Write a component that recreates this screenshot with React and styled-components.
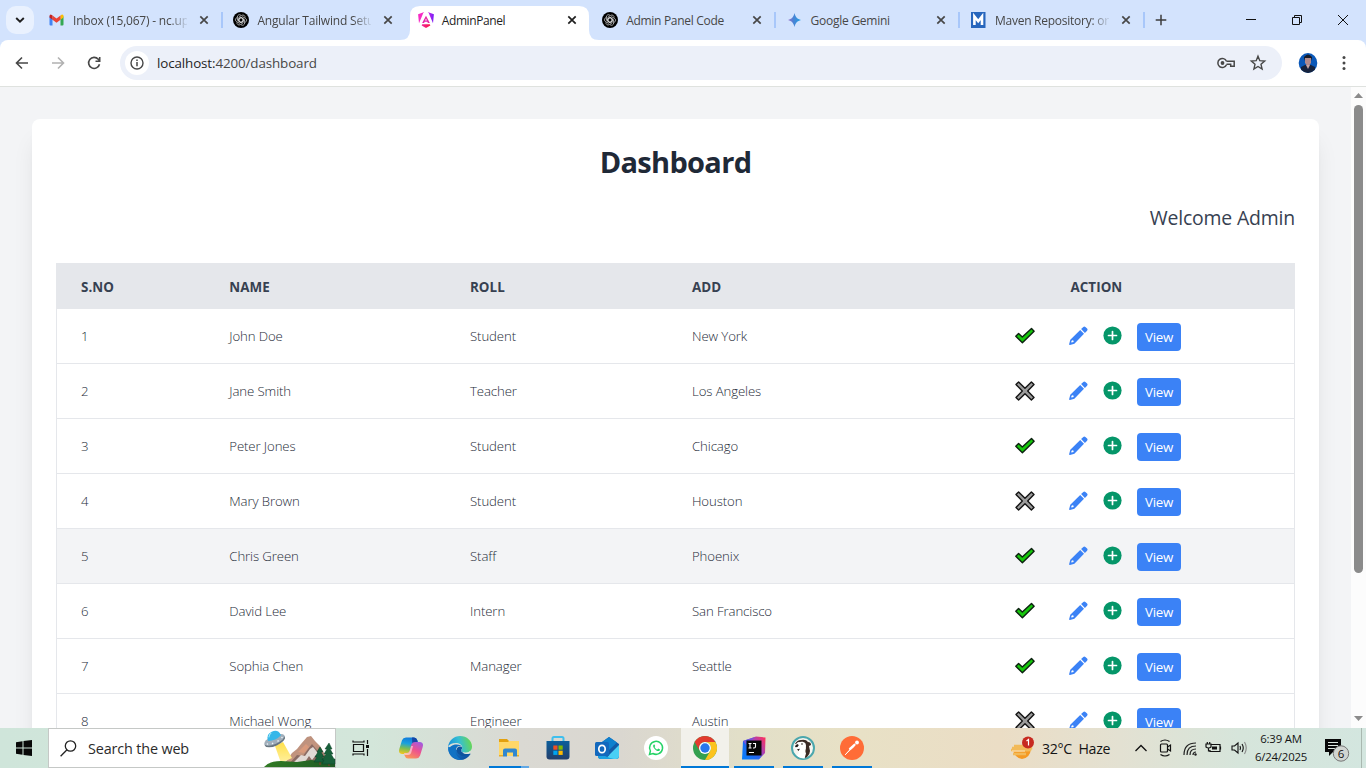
import React from 'react';
import styled, { createGlobalStyle } from 'styled-components';

const GlobalStyle = createGlobalStyle`
  * { box-sizing: border-box; }
  body { margin: 0; overflow: hidden; font-family: "Open Sans", "Noto Sans", sans-serif; }
  svg { display: block; flex: none; overflow: visible; }
`;

const Screen = styled.div`
  width: 1366px;
  height: 768px;
  display: flex;
  flex-direction: column;
  overflow: hidden;
  background: #f3f4f6;
`;

/* ---------- browser chrome ---------- */
const TabStrip = styled.div`
  height: 40px;
  flex: none;
  display: flex;
  align-items: center;
  background: #d3e3fd;
`;
const TabSearch = styled.div`
  width: 28px;
  height: 28px;
  margin: 0 7px 0 6px;
  border-radius: 10px;
  background: #e9f1fe;
  display: grid;
  place-items: center;
`;
const Tab = styled.div`
  position: relative;
  width: 184.4px;
  height: 40px;
  display: flex;
  align-items: center;
  padding-left: 8px;
`;
const ActiveShape = styled.svg`
  position: absolute;
  left: -9.8px;
  top: 0;
`;
const TabIcon = styled.span`
  position: relative;
`;
const TabTitle = styled.span`
  width: 114px;
  margin-left: 8px;
  padding-top: 2px;
  font-size: 12px;
  letter-spacing: ${(p) => p.$spacing || 0}px;
  line-height: 16px;
  white-space: nowrap;
  position: relative;
  color: ${(p) => (p.$active ? '#1f1f1f' : '#474747')};
  ${(p) => p.$fade && 'mask-image: linear-gradient(90deg, #000 84%, transparent 102%);'}
`;
const Divider = styled.i`
  width: 2px;
  height: 16px;
  margin-left: 12px;
  background: ${(p) => (p.$hidden ? 'transparent' : '#a8c7fa')};
`;
const TabClose = styled.span`
  position: relative;
  margin-left: 11.6px;
`;
const NewTab = styled.svg`
  margin-left: 8px;
`;
const WindowButtons = styled.div`
  margin-left: auto;
  display: flex;
  gap: 34px;
  padding-right: 17px;
`;
const Toolbar = styled.div`
  height: 47px;
  display: flex;
  align-items: center;
  background: #fff;
  border-bottom: 1px solid #dfe2df;
  border-radius: 8px 8px 0 0;
  padding-left: 14px;
`;
const ToolbarBack = styled.div`
  flex: none;
  background: #d3e3fd;
`;
const NavIcons = styled.div`
  display: flex;
  gap: 20px;
`;
const Omnibox = styled.div`
  width: 1162px;
  height: 34px;
  margin-left: 18px;
  border-radius: 17px;
  background: #ecf0f9;
  display: flex;
  align-items: center;
  padding: 0 15px 0 5px;
`;
const SiteInfo = styled.span`
  width: 24px;
  height: 24px;
  border-radius: 50%;
  background: #fff;
  display: grid;
  place-items: center;
`;
const Url = styled.span`
  margin-left: 8px;
  flex: 1;
  font-size: 13.4px;
  letter-spacing: -0.12px;
  color: #474747;
  b { font-weight: 400; color: #1f1f1f; }
`;
const OmniIcons = styled.div`
  display: flex;
  align-items: center;
  gap: 14px;
`;
const Avatar = styled.svg`
  margin-left: 16px;
`;
const Kebab = styled.svg`
  margin-left: 23px;
`;

/* ---------- page ---------- */
const Viewport = styled.div`
  height: 641px;
  flex: none;
  display: flex;
  overflow: hidden;
`;
const Page = styled.main`
  flex: 1;
  padding: 32px;
`;
const Card = styled.section`
  height: 760px;
  padding: 24px;
  background: #fff;
  border-radius: 8px;
  box-shadow: 0 20px 25px -5px rgba(0, 0, 0, 0.1), 0 8px 10px -6px rgba(0, 0, 0, 0.1);
`;
const Title = styled.h1`
  margin: 0;
  font-size: 29px;
  line-height: 38px;
  font-weight: 700;
  letter-spacing: -0.68px;
  text-align: center;
  color: #1f2937;
`;
const Welcome = styled.p`
  margin: 23px 0 32px;
  font-size: 19.4px;
  line-height: 27px;
  text-align: right;
  color: #374151;
  letter-spacing: -0.16px;
`;
const Table = styled.div`
  border: 1px solid #e5e7eb;
`;
const Row = styled.div`
  display: grid;
  grid-template-columns: 148.3px 240.7px 222px 347px 1fr;
  height: 55px;
  padding-left: 24px;
  align-items: center;
  border-bottom: 1px solid #e5e7eb;
  background: ${(p) => (p.$hover ? '#f3f4f6' : '#fff')};
  font-size: 13.2px;
  font-weight: 300;
  letter-spacing: -0.1px;
  color: #252b38;
`;
const HeadRow = styled(Row)`
  grid-template-columns: 148.3px 240.7px 222px 378.5px 1fr;
  height: 45px;
  padding-top: 2px;
  background: #e5e7eb;
  font-size: 13.4px;
  font-weight: 700;
  letter-spacing: 0.05px;
  color: #374151;
`;
const Actions = styled.div`
  display: flex;
  align-items: center;
  svg { margin-bottom: 2px; }
`;
const Status = styled.span`
  width: 54px;
  margin: 1px 0 0 -24px;
`;
const AddIcon = styled.span`
  margin: 0 15px;
`;
const ViewButton = styled.button`
  width: 44px;
  height: 28px;
  margin-top: 1px;
  padding: 0;
  border: 0;
  border-radius: 4px;
  background: #3b82f6;
  color: #fff;
  font: 400 13.3px/28px "Open Sans", sans-serif;
  letter-spacing: -0.25px;
`;
const Scrollbar = styled.div`
  width: 15px;
  background: #fcfcfc;
  display: flex;
  flex-direction: column;
  align-items: center;
  padding: 6px 0 7px;
`;
const Thumb = styled.div`
  width: 9px;
  height: 468px;
  margin: 7px 0 auto;
  border-radius: 5px;
  background: #8b8b8b;
`;

/* ---------- taskbar ---------- */
const Taskbar = styled.footer`
  height: 40px;
  flex: none;
  display: flex;
  align-items: stretch;
  background: linear-gradient(90deg, #cfe5da 0, #d3e6da 370px, #dad9d3 520px, #dad7d0 620px, #e2dfc8 740px, #e8e1c6 860px, #ebddc5 1000px, #e3e1d2 1120px, #d6e5db 1240px, #d3e6df 1366px);
`;
const TaskItem = styled.div`
  position: relative;
  flex: none;
  width: ${(p) => p.$width || 49}px;
  display: grid;
  place-items: center;
  background: ${(p) => (p.$active ? '#f2f1eb' : 'transparent')};
`;
const Running = styled.i`
  position: absolute;
  bottom: 0;
  width: ${(p) => (p.$full ? '100%' : '40px')};
  height: 2px;
  background: ${(p) => (p.$stacked ? 'linear-gradient(90deg, #0078d7 80%, #62a8e5 80%)' : '#0078d7')};
`;
const SearchBox = styled.div`
  width: 288px;
  display: flex;
  align-items: center;
  border: 1px solid #c5c8c6;
  background: #fff;
  padding-left: 11px;
  font-size: 14.4px;
  letter-spacing: -0.15px;
  color: #2b2b2b;
  svg:last-child { margin-left: auto; }
`;
const SearchText = styled.span`
  margin-left: 11px;
`;
const Tray = styled.div`
  margin-left: auto;
  display: flex;
  align-items: center;
  color: #151515;
  font-size: 14.2px;
`;
const Weather = styled.span`
  width: 93px;
  margin-left: 8px;
  white-space: pre;
  letter-spacing: -0.35px;
`;
const TrayIcons = styled.div`
  display: flex;
  align-items: center;
  gap: 8.5px;
  svg:nth-child(2) { margin-left: 1.5px; }
`;
const Clock = styled.div`
  width: 60px;
  margin-left: 3.5px;
  display: flex;
  flex-direction: column;
  align-items: center;
  font-size: 11.4px;
  line-height: 18px;
  letter-spacing: -0.2px;
  white-space: nowrap;
`;
const Notice = styled.svg`
  margin: 3px 10px 0 14px;
`;
const ShowDesktop = styled.i`
  width: 5px;
  height: 40px;
  border-left: 1px solid #a9b8b0;
`;

const Close = ({ color = '#474747' }) => (
  <svg width="10" height="10" viewBox="0 0 10 10" stroke={color} strokeWidth="1.7"><path d="M1.3 1.3l7.4 7.4M8.7 1.3L1.3 8.7" /></svg>
);

const Gmail = () => (
  <svg width="16" height="16" viewBox="0 0 16 16">
    <g transform="translate(-.5 0)">
      <path d="M1 4.2V12.5q0 .9 1 .9h2V6.5z" fill="#4285f4" />
      <path d="M15 4.2V12.5q0 .9-1 .9h-2V6.5z" fill="#34a853" />
      <path d="M12 3.5l1-.7q1-.6 1.7.2.3.4.3 1v1.4L12 7.8z" fill="#fbbc04" />
      <path d="M4 3.5L8 6.6l4-3.1v4.3l-4 3-4-3z" fill="#ea4335" />
      <path d="M1 5.4V4q0-1.5 1.3-1.5l.9.4.8.6v4.3z" fill="#c5221f" />
    </g>
  </svg>
);
const OpenAI = () => (
  <svg width="16" height="16" viewBox="0 0 16 16">
    <circle cx="8" cy="8" r="8" fill="#000" />
    <g fill="none" stroke="#d8d8d8" strokeWidth=".7">
      {[0, 60, 120, 180, 240, 300].map((a) => (
        <path key={a} transform={`rotate(${a} 8 8)`} d="M6 8.8V5L8.8 3.3c1.6-.9 3.5.3 3.3 2.2M6 6.7l2-1.2 2.2 1.2" />
      ))}
    </g>
  </svg>
);
const Angular = () => (
  <svg width="16" height="16" viewBox="0 0 16 16">
    <defs>
      <linearGradient id="ngBase" x1="0" x2="1"><stop stopColor="#f0269e" /><stop offset="1" stopColor="#fa1540" /></linearGradient>
      <linearGradient id="ngRight" x1="0" x2="1"><stop stopColor="#d020ec" /><stop offset="1" stopColor="#7222f5" /></linearGradient>
    </defs>
    <path d="M6.3 0L.1 2.2l.9 9L5.3.9z" fill="#f62bc5" />
    <path d="M9.7 0l6.2 2.2-.9 9L10.7.9z" fill="url(#ngRight)" />
    <path d="M8 3.8L4.2 11h1.9l.6-1.3h2.6l.6 1.3h1.9zM8 6.6l.9 1.9H7.1z" fill="#e326a8" fillRule="evenodd" />
    <path d="M4.2 12.2h7.6l.5 1.2L8 16l-4.300-2.600z" fill="url(#ngBase)" />
  </svg>
);
const Gemini = () => (
  <svg width="16" height="16" viewBox="0 0 16 16">
    <defs><linearGradient id="gem" x1="0" y1="0" x2="1" y2="0"><stop stopColor="#9b72cb" /><stop offset=".4" stopColor="#4c82d4" /><stop offset="1" stopColor="#1ba1e3" /></linearGradient></defs>
    <path d="M7.5 1C8.5 5.2 10.3 7 14 8c-3.700 1-5.500 2.800-6.500 7-1-4.200-2.800-6-6.500-7 3.700-1 5.500-2.800 6.500-7z" fill="url(#gem)" />
  </svg>
);
const Maven = () => (
  <svg width="16" height="16" viewBox="0 0 16 16">
    <rect x="0" width="14.5" height="16" fill="#2766bd" />
    <path d="M3.4 13V4.500l3.800 4.700L11 4.500V13" fill="none" stroke="#fff" strokeWidth="2.6" />
  </svg>
);

const tabs = [
  { title: 'Inbox (15,067) - nc.up', icon: <Gmail />, fade: true, spacing: -0.2 },
  { title: 'Angular Tailwind Setu', icon: <OpenAI />, fade: true, noLine: true, spacing: -0.2 },
  { title: 'AdminPanel', icon: <Angular />, active: true, noLine: true, spacing: -0.4 },
  { title: 'Admin Panel Code', icon: <OpenAI />, spacing: -0.3 },
  { title: 'Google Gemini', icon: <Gemini />, spacing: -0.25 },
  { title: 'Maven Repository: or', icon: <Maven />, fade: true, spacing: -0.25 },
];

const Check = () => (
  <svg width="20" height="18" viewBox="0 0 20 18"><path d="M.8 9.3L3.6 6.5l3.7 3.4L16.5 1.500l2.600 2.700L7.400 15.700z" fill="#16c60c" stroke="#0c2010" strokeWidth="1.4" strokeLinejoin="round" /></svg>
);
const Cross = () => (
  <svg width="20" height="20" viewBox="0 0 20 20"><path d="M1 3.6L3.6 1 10 7.2 16.4 1 19 3.600 12.700 10l6.300 6.400-2.600 2.600L10 12.800 3.600 19 1 16.400 7.300 10z" fill="#9b9b9b" stroke="#141414" strokeWidth="1.4" strokeLinejoin="round" /></svg>
);
const Pencil = () => (
  <svg width="19" height="19" viewBox="0 0 19 19" fill="#3b82f6">
    <path d="M12.1 3.1l3.8 3.8 2.2-2.2q1-1.1 0-2.1L16.4.9q-1.100-1-2.100 0z" />
    <path fillRule="evenodd" d="M11.2 4L1.3 13.700.1 18.200q0 .8.9.7l4.400-1.200L15 7.800zM3 14.300l1.400.3.300 1.300-2.100.7-.5-.5z" />
  </svg>
);
const Plus = () => (
  <svg width="19" height="19" viewBox="0 0 19 19"><circle cx="9.5" cy="9.500" r="9.1" fill="#059669" /><path d="M9.5 5.500v8M5.500 9.500h8" stroke="#fff" strokeWidth="1.7" strokeLinecap="round" /></svg>
);

const people = [
  ['John Doe', 'Student', 'New York', true],
  ['Jane Smith', 'Teacher', 'Los Angeles', false],
  ['Peter Jones', 'Student', 'Chicago', true],
  ['Mary Brown', 'Student', 'Houston', false],
  ['Chris Green', 'Staff', 'Phoenix', true],
  ['David Lee', 'Intern', 'San Francisco', true],
  ['Sophia Chen', 'Manager', 'Seattle', true],
  ['Michael Wong', 'Engineer', 'Austin', false],
];

const Scene = () => (
  <svg width="71" height="38" viewBox="0 0 71 38">
    <defs>
      <linearGradient id="hill" x1="0" x2="1"><stop stopColor="#327b25" /><stop offset="1" stopColor="#1e5a24" /></linearGradient>
      <linearGradient id="mount" x1="0" x2="1" y2="1"><stop stopColor="#b58f7e" /><stop offset=".5" stopColor="#c3947e" /><stop offset="1" stopColor="#8b695e" /></linearGradient>
      <linearGradient id="beam" x1="0" x2="0" y2="1"><stop stopColor="#ffe04a" /><stop offset="1" stopColor="#fff0a0" /></linearGradient>
    </defs>
    <path d="M20 35l8-11 5-4 4-5 6-7 4-1 4 5 5 5 4 7 6 12z" fill="url(#mount)" />
    <path d="M25 35l8-9 6 1 5-7 4-5 4 5 5 5 5 10z" fill="#8b6b63" />
    <path d="M30 33l7-7 4 1 5-7 3-2 4 5 3 4-4-1-4 5-3-4-4 6z" fill="#e1d9d5" />
    <path d="M34 23l8-8 3 3-5 6z" fill="#d99a7c" />
    <path d="M11 17l8-4 9 16-11 5z" fill="url(#beam)" />
    <path d="M0 38q5-6 17-6l16 1 14-2 24 3v4z" fill="url(#hill)" />
    <path d="M56 31v5M65 31v6" stroke="#6b4328" strokeWidth="1.5" />
    <g fill="#17603a" stroke="#0e4329" strokeWidth=".5">
      <path d="M56 18l-3 5h1l-3 5h2l-3 5h11l-3-5h2l-3-5h2z" />
      <path d="M65 14l-4 6h2l-3 5h2l-4 6h2l-2 4h13v-5h-1l-3-5h2l-3-5h2z" />
    </g>
    <g transform="translate(1 0) rotate(-24 10 10)">
      <ellipse cx="9" cy="12" rx="11" ry="4.6" fill="#68757f" />
      <ellipse cx="9" cy="10.5" rx="11" ry="4.2" fill="#a1aeba" />
      <path d="M3 9q0-7 7-7t7 7q-7 3-14 0z" fill="#36b7e9" />
      <path d="M5 6q2-3 4-3" stroke="#a4eafa" fill="none" />
      <g fill="#e9f4fa"><circle cx="1" cy="11.5" r=".8" /><circle cx="6" cy="13" r=".8" /><circle cx="12" cy="13" r=".8" /><circle cx="17" cy="11.5" r=".8" /></g>
    </g>
  </svg>
);

const Copilot = () => (
  <svg width="24" height="24" viewBox="0 0 24 24">
    <defs>
      <linearGradient id="cpA" x1=".4" y1="0" x2=".2" y2="1"><stop stopColor="#117bdb" /><stop offset=".35" stopColor="#1aa1de" /><stop offset=".65" stopColor="#7bbd55" /><stop offset="1" stopColor="#f6c61c" /></linearGradient>
      <linearGradient id="cpB" x1=".8" y1="0" x2=".2" y2="1"><stop stopColor="#a25be0" /><stop offset=".45" stopColor="#ed528f" /><stop offset="1" stopColor="#fb9a54" /></linearGradient>
    </defs>
    <path d="M7 1.500h8q2.500 0 3.300 2.800L19 7h-3q-2 0-2.600 2l-2 7Q10.500 18 8 18H3q-4-.5-2.700-5L3 4.200Q4 1.500 7 1.500z" fill="url(#cpA)" />
    <path d="M13 1.500h2q2.500 0 3.300 2.800L19 7h-3q-2 0-2.600 2z" fill="#1546a6" />
    <path d="M17 22.500H9Q6.500 22.500 5.700 19.700L5 17h3q2 0 2.600-2l2-7Q13.500 6 16 6h5q4 .5 2.700 5L21 19.800q-1 2.700-4 2.700z" fill="url(#cpB)" />
    <path d="M10.600 15l1.500-5h2l-2 7q-.8 2-3 2H5.500L5 17h3q2 0 2.600-2z" fill="#fff" fillOpacity=".5" />
  </svg>
);
const Edge = () => (
  <svg width="24" height="24" viewBox="0 0 24 24">
    <defs>
      <linearGradient id="edA" x1="0" y1=".6" x2="1" y2=".4"><stop stopColor="#168fd9" /><stop offset=".5" stopColor="#36bed4" /><stop offset="1" stopColor="#69d84f" /></linearGradient>
      <linearGradient id="edB" x1="0" x2="1" y2="1"><stop stopColor="#1681d2" /><stop offset="1" stopColor="#0d4b9a" /></linearGradient>
    </defs>
    <path d="M.1 10.500A12 12 0 0 0 12 24c4.500 0 8-2 10.300-5.500.4-.7-.2-1.200-.8-.9C18 19 13.500 18 12 15z" fill="url(#edB)" />
    <path d="M.1 10.500C1 4.400 6 0 12 0c7 0 12 5 12 10.500 0 4-3 6.300-6.500 6.300-3 0-4.500-1-4.200-2.300.4-1 1-1.500 1-3 0-2.500-3-4.500-6.600-4.500C4 7 1 8.600.1 10.500z" fill="url(#edA)" />
    <path d="M9 11c-3 4.500-.5 11.500 5.500 12.700A12 12 0 0 1 .5 14C1 11 4 8.500 8.500 8.500c3 0 5 1 5.800 3-1.500-1.800-3.800-1.800-5.300-.5z" fill="#1172c4" />
    <path d="M13.300 14.500c-.3-1 .9-1.500 1-3-2-2-5-1-5.500 1.500-.6 3 2 6.500 6 7 2.500.3 5-.5 6.700-2.400-3 1-7.200 0-8.200-3.100z" fill="#0e549f" />
    <path d="M13.300 14.500c-.3 1.300 1.200 2.300 4.200 2.300 2 0 3.700-.8 4.800-2l-.6 2.700c-3 1.200-7.400.4-8.400-3z" fill="#dce7de" />
  </svg>
);
const Explorer = () => (
  <svg width="22" height="20" viewBox="0 0 22 20">
    <path d="M1 1h8l2 2h10v5H1z" fill="#e3a10e" /><path d="M1 4h9l1-1h10v15H1z" fill="#ffd767" />
    <path d="M5 18.500v-6q0-2 2-2h10q2 0 2 2v6h-4v-4H9v4z" fill="#3187cf" /><path d="M1 17h4v1.500H1zM19 17h2v1.500h-2z" fill="#e9ad28" />
  </svg>
);
const Store = () => (
  <svg width="24" height="24" viewBox="0 0 24 24">
    <defs><linearGradient id="store" y2="1" x2="0"><stop stopColor="#0b5e9b" /><stop offset="1" stopColor="#243f6c" /></linearGradient></defs>
    <path d="M6.500 6V2.500Q6.500 1 8 1h8q1.500 0 1.500 1.500V6" fill="none" stroke="#3fbfed" strokeWidth="2" />
    <path d="M.5 5h23v15.500q0 3-3 3h-17q-3 0-3-3z" fill="url(#store)" />
    <path d="M7.300 9.500h4.200v4.200H7.300z" fill="#f25022" /><path d="M12.500 9.500h4.200v4.200h-4.200z" fill="#7fba00" /><path d="M7.300 14.700h4.200v4.200H7.300z" fill="#00a4ef" /><path d="M12.500 14.700h4.200v4.200h-4.200z" fill="#ffb900" />
  </svg>
);
const Outlook = () => (
  <svg width="24" height="22" viewBox="0 0 24 22">
    <path d="M3 8L14 0l10 7v12q0 3-3 3H6q-3 0-3-3z" fill="#135ba8" /><path d="M7 5l7-5 8 5.500L13 14 7 12z" fill="#0f80ce" />
    <path d="M24 8v11q0 3-3 3H7q6-1 8-5z" fill="#49cff5" /><path d="M3 16l12 5 4 1H6q-3 0-3-3z" fill="#1ba2e3" />
    <rect y="5" width="14" height="14" rx="1.5" fill="#1268bd" /><ellipse cx="7" cy="12" rx="3.2" ry="3.7" fill="none" stroke="#fff" strokeWidth="1.7" />
  </svg>
);
const WhatsApp = () => (
  <svg width="24" height="24" viewBox="0 0 24 24"><circle cx="12" cy="12" r="12" fill="#fff" />
    <path d="M5.500 18.500l.9-3.500a6.500 6.500 0 1 1 2.500 2.500z" fill="none" stroke="#25d366" strokeWidth="1.5" />
    <path d="M9.800 8.500c-1 .8-.9 2 .1 3.500 1.500 2.200 3.500 3.500 5 3 .9-.3 1.200-.9 1.100-1.500l-1.700-.9-1 .9c-1.300-.5-2.300-1.500-2.700-2.600l.6-.8-.7-1.600z" fill="#25d366" />
  </svg>
);
const Chrome = () => (
  <svg width="24" height="24" viewBox="0 0 24 24">
    <circle cx="12" cy="12" r="12" fill="#34a050" /><path d="M12 0a12 12 0 0 1 10.400 6H12a6 6 0 0 0-5.200 9L1.600 6A12 12 0 0 1 12 0z" fill="#e23b2e" />
    <path d="M22.400 6A12 12 0 0 1 12 24l5.200-9A6 6 0 0 0 12 6z" fill="#fcc31e" /><circle cx="12" cy="12" r="6" fill="#fff" /><circle cx="12" cy="12" r="4.7" fill="#2877ed" />
  </svg>
);
const IntelliJ = () => (
  <svg width="24" height="24" viewBox="0 0 24 24">
    <defs><linearGradient id="ij" x1="0" y1=".8" x2="1" y2=".1"><stop stopColor="#087cfa" /><stop offset=".45" stopColor="#2863ee" /><stop offset=".6" stopColor="#a044bf" /><stop offset="1" stopColor="#fe315d" /></linearGradient></defs>
    <path d="M1 5L14 .5l9.500 1L23 17l-6 6.500H0z" fill="url(#ij)" /><path d="M1 5L13 1l-4 3.500H4V9z" fill="#7653d8" />
    <rect x="4.5" y="4.5" width="15" height="15" fill="#080808" /><path d="M6.500 7.500h3M8 7.500v4.500M6.500 12h3M11 7.500h2.500v3q0 1.500-1.500 1.500h-1" fill="none" stroke="#fff" strokeWidth="1.1" /><path d="M7 16h5v1H7z" fill="#fff" />
  </svg>
);
const DBeaver = () => (
  <svg width="24" height="24" viewBox="0 0 24 24"><circle cx="12" cy="12" r="11" fill="#f7f5f0" stroke="#4ba7ad" strokeWidth="2" />
    <path d="M4 8q2-4 6-4 5-1 7 2 3 0 3 3l-2 1 1 5q0 3-3 6l-2 1q-2-2 0-5l1-5-3-5-5-1-2 2z" fill="#3a2a24" />
    <path d="M7.500 6.500c2-1.500 6-1 7 1 1 2.500.5 4.500-1 6l1.500 4-1.500 5q-5 0-8-3 3-2 2-5.500l-1-1.500-2 .5-1.500-2z" fill="#fff" />
    <circle cx="11" cy="8" r=".8" fill="#1f1713" /><path d="M4 10l2.200-2 1.600 1-1.300 2-2 .3zM6 13.200l3-.5-1.500 2.300z" fill="#251b17" />
  </svg>
);
const Postman = () => (
  <svg width="24" height="24" viewBox="0 0 24 24"><circle cx="12" cy="12" r="12" fill="#ff6c37" />
    <g fill="none" stroke="#fff" strokeLinecap="round"><circle cx="17" cy="6.5" r="1.9" fill="#fff" stroke="none" /><path d="M14.500 8.800l-4.500 4" strokeWidth="2.3" /><path d="M10.500 13L5.500 18.500M14 10.500L9 15l-3.500 3.500" strokeWidth=".9" /></g>
  </svg>
);

const TaskView = () => (
  <svg width="18" height="16" viewBox="0 0 18 16" fill="none" stroke="#111" strokeWidth="1.2"><path d="M1.500 4.500h10v7h-10zM1 .5V2h11V.5M1 15.500V14h11v1.500M15.500 0v4M15.500 9v7" /><path d="M14 5h3v3h-3z" fill="#111" stroke="none" /></svg>
);

const taskApps = [
  { name: 'copilot', icon: <Copilot /> },
  { name: 'edge', icon: <Edge /> },
  { name: 'explorer', icon: <Explorer />, running: true, stacked: true },
  { name: 'store', icon: <Store /> },
  { name: 'outlook', icon: <Outlook /> },
  { name: 'whatsapp', icon: <WhatsApp />, width: 49.5 },
  { name: 'chrome', icon: <Chrome />, running: true, active: true, width: 48 },
  { name: 'intellij', icon: <IntelliJ />, running: true, width: 50 },
  { name: 'dbeaver', icon: <DBeaver />, running: true, width: 48 },
  { name: 'postman', icon: <Postman />, running: true, width: 50 },
];

export default function App() {
  return (
    <Screen>
      <GlobalStyle />
      <TabStrip>
        <TabSearch><svg width="10" height="6" viewBox="0 0 10 6" fill="none" stroke="#1f1f1f" strokeWidth="1.9"><path d="M1.200 1L5 4.700 8.800 1" /></svg></TabSearch>
        {tabs.map((t) => (
          <Tab key={t.title}>
            {t.active && (
              <ActiveShape width="200" height="40" viewBox="0 0 200 40"><path d="M0 40q10 0 10-10V16Q10 6 20 6h159q10 0 10 10v14q0 10 10 10z" fill="#fff" /></ActiveShape>
            )}
            <TabIcon>{t.icon}</TabIcon>
            <TabTitle $active={t.active} $fade={t.fade} $spacing={t.spacing}>{t.title}</TabTitle>
            <TabClose><Close color={t.active ? '#1f1f1f' : undefined} /></TabClose>
            <Divider $hidden={t.noLine} />
          </Tab>
        ))}
        <NewTab width="12" height="12" viewBox="0 0 12 12" stroke="#3c3c3c" strokeWidth="1.5"><path d="M6 .7v10.600M.7 6h10.600" /></NewTab>
        <WindowButtons>
          <svg width="12" height="12" viewBox="0 0 12 12" stroke="#111"><path d="M1 5.500h10" /></svg>
          <svg width="12" height="12" viewBox="0 0 12 12" fill="none" stroke="#111"><path d="M1.500 3.500h7v7h-7zM3.500 3.500v-2h7v7h-2" /></svg>
          <svg width="12" height="12" viewBox="0 0 12 12" stroke="#111"><path d="M1 1l10 10M11 1L1 11" /></svg>
        </WindowButtons>
      </TabStrip>

      <ToolbarBack>
        <Toolbar>
          <NavIcons>
            <svg width="16" height="16" viewBox="0 0 16 16" fill="none" stroke="#474747" strokeWidth="1.6"><path d="M14 8H3M8 2.500L2.500 8 8 13.500" /></svg>
            <svg width="16" height="16" viewBox="0 0 16 16" fill="none" stroke="#b1b1b1" strokeWidth="1.6"><path d="M2 8h11M8 2.500L13.500 8 8 13.500" /></svg>
            <svg width="16" height="16" viewBox="0 0 16 16" fill="none" stroke="#474747" strokeWidth="1.6"><path d="M13.500 9.200A5.500 5.500 0 1 1 12.300 4.300L13.700 5.800M13.700 2v4.200H9.500" /></svg>
          </NavIcons>
          <Omnibox>
            <SiteInfo><svg width="14" height="14" viewBox="0 0 14 14"><circle cx="7" cy="7" r="6" fill="none" stroke="#474747" strokeWidth="1.4" /><path d="M7 6v4.300M7 3.500v1.500" stroke="#474747" strokeWidth="1.5" /></svg></SiteInfo>
            <Url><b>localhost:</b>4200/dashboard</Url>
            <OmniIcons>
              <svg width="18" height="12" viewBox="0 0 18 12" fill="none" stroke="#474747" strokeWidth="1.5"><path d="M9.500 4.200h7.700v5h-3.500v-2H9.500M9.500 4.200A4.500 4.500 0 1 0 9.500 7.800" /><circle cx="5.5" cy="6" r="1.9" fill="#474747" stroke="none" /></svg>
              <svg width="18" height="18" viewBox="0 0 18 18" fill="none" stroke="#474747" strokeWidth="1.4"><path d="M9 2.200l1.800 4.500 4.900.4-3.700 3.200 1.100 4.700L9 12.500 4.900 15 6 10.300 2.300 7.100l4.900-.4z" /></svg>
            </OmniIcons>
          </Omnibox>
          <Avatar width="20" height="20" viewBox="0 0 20 20">
            <clipPath id="avatar"><ellipse cx="10" cy="10" rx="9.3" ry="10" /></clipPath>
            <g clipPath="url(#avatar)"><path d="M0 0h20v20H0z" fill="#0b58b8" /><path d="M3 20V14l4-2h6l4 2v6z" fill="#16233e" /><path d="M7 5h6v5q-3 5-6 0z" fill="#b08a8c" /><path d="M6 8V4q4-5 8 0v4l-1-3H7z" fill="#171b29" /><path d="M8 12l2 4 2-4z" fill="#c9a5a2" /></g>
          </Avatar>
          <Kebab width="6" height="16" viewBox="0 0 6 16" fill="#474747"><circle cx="3" cy="2.5" r="1.5" /><circle cx="3" cy="8" r="1.5" /><circle cx="3" cy="13.5" r="1.5" /></Kebab>
        </Toolbar>
      </ToolbarBack>

      <Viewport>
        <Page>
          <Card>
            <Title>Dashboard</Title>
            <Welcome>Welcome Admin</Welcome>
            <Table>
              <HeadRow><span>S.NO</span><span>NAME</span><span>ROLL</span><span>ADD</span><span>ACTION</span></HeadRow>
              {people.map(([name, role, city, ok], i) => (
                <Row key={name} $hover={i === 4}>
                  <span>{i + 1}</span><span>{name}</span><span>{role}</span><span>{city}</span>
                  <Actions>
                    <Status>{ok ? <Check /> : <Cross />}</Status>
                    <Pencil />
                    <AddIcon><Plus /></AddIcon>
                    <ViewButton>View</ViewButton>
                  </Actions>
                </Row>
              ))}
            </Table>
          </Card>
        </Page>
        <Scrollbar>
          <svg width="9" height="5" viewBox="0 0 9 5"><path d="M4.500 0L9 5H0z" fill="#8b8b8b" /></svg>
          <Thumb />
          <svg width="9" height="5" viewBox="0 0 9 5"><path d="M0 0h9L4.500 5z" fill="#8b8b8b" /></svg>
        </Scrollbar>
      </Viewport>

      <Taskbar>
        <TaskItem $width={48}>
          <svg width="16" height="16" viewBox="0 0 16 16" fill="#080808"><path d="M0 2.200L6.500 1.300v6.200H0zM7.500 1.100L16 0v7.500H7.500zM0 8.500h6.500v6.200L0 13.800zM7.500 8.500H16V16l-8.500-1.100z" /></svg>
        </TaskItem>
        <SearchBox>
          <svg width="17" height="17" viewBox="0 0 17 17" fill="none" stroke="#222" strokeWidth="1.3"><circle cx="10.5" cy="6" r="5.2" /><path d="M7 9.800L.6 16.200" /></svg>
          <SearchText>Search the web</SearchText>
          <Scene />
        </SearchBox>
        <TaskItem $width={50.5}><TaskView /></TaskItem>
        {taskApps.map((a) => (
          <TaskItem key={a.name} $active={a.active} $width={a.width}>
            {a.icon}
            {a.running && <Running $full={a.active} $stacked={a.stacked} />}
          </TaskItem>
        ))}
        <Tray>
          <svg width="24" height="24" viewBox="0 0 24 24">
            <path d="M3 14q4 3 18-1-1 9-9 10-7-1-9-9z" fill="#f59a23" /><path d="M4 10h13q4 0 4 2H2M1 14h14q4 1 6-1M3 18h13" fill="none" stroke="#f2ba59" strokeWidth="2.5" />
            <path d="M2 15h13" stroke="#f8d49b" strokeWidth="1.5" /><circle cx="18" cy="6.5" r="6" fill="#c72a20" /><path d="M16.500 5l2-1.500v6" fill="none" stroke="#fff" strokeWidth="1.2" />
          </svg>
          <Weather>32°C  Haze</Weather>
          <TrayIcons>
            <svg width="12" height="8" viewBox="0 0 12 8" fill="none" stroke="#111" strokeWidth="1.3"><path d="M.5 7L6 1.500 11.500 7" /></svg>
            <svg width="17" height="18" viewBox="0 0 16 18" fill="none" stroke="#111" strokeWidth="1.2"><rect x="3" y="5" width="7" height="8" rx="1" /><path d="M10 8l3-2v6l-3-2M3 2.500Q7.500-.5 12 2.500M3 15.500q4.500 3 9 0" /></svg>
            <svg width="14" height="15" viewBox="0 0 14 15" fill="none" stroke="#222" strokeWidth="1.2"><path d="M1 14Q1 2 13 2M4 14q0-9 9-9M7 14q0-6 6-6M10 14q0-3 3-3" /><circle cx="12.5" cy="13.5" r="1.2" fill="#222" stroke="none" /></svg>
            <svg width="17" height="14" viewBox="0 0 17 14" fill="none" stroke="#111" strokeWidth="1.2"><path d="M6 3.500h9v7H5V9M15.500 5.500v3M1 3h5v3Q3.500 8 1 6zM2.300 1v2M4.700 1v2M3.500 7v3H5" /><path d="M7 5.500h5v3H7z" fill="#111" stroke="none" /></svg>
            <svg width="17" height="14" viewBox="0 0 17 14" fill="none" stroke="#111" strokeWidth="1.1"><path d="M1 5h2.500L7 2v10L3.500 9H1zM9 5q1 2 0 4M11 3q2.500 4 0 8" /><path d="M13.500 1q3.500 6 0 12" stroke="#888" /></svg>
          </TrayIcons>
          <Clock><div>6:39 AM</div><div>6/24/2025</div></Clock>
          <Notice width="26" height="24" viewBox="0 0 26 24">
            <path d="M0 1h16v13h-8l-4 4v-4H0z" fill="#080808" /><path d="M3 4.500h10M3 7.500h10M3 10.500h7" stroke="#dce5de" />
            <circle cx="16" cy="15.5" r="7.7" fill="#d1d5d1" stroke="#777" /><text x="16" y="19.5" textAnchor="middle" fontSize="11.5" fontFamily="Open Sans" fill="#111">6</text>
          </Notice>
          <ShowDesktop />
        </Tray>
      </Taskbar>
    </Screen>
  );
}
